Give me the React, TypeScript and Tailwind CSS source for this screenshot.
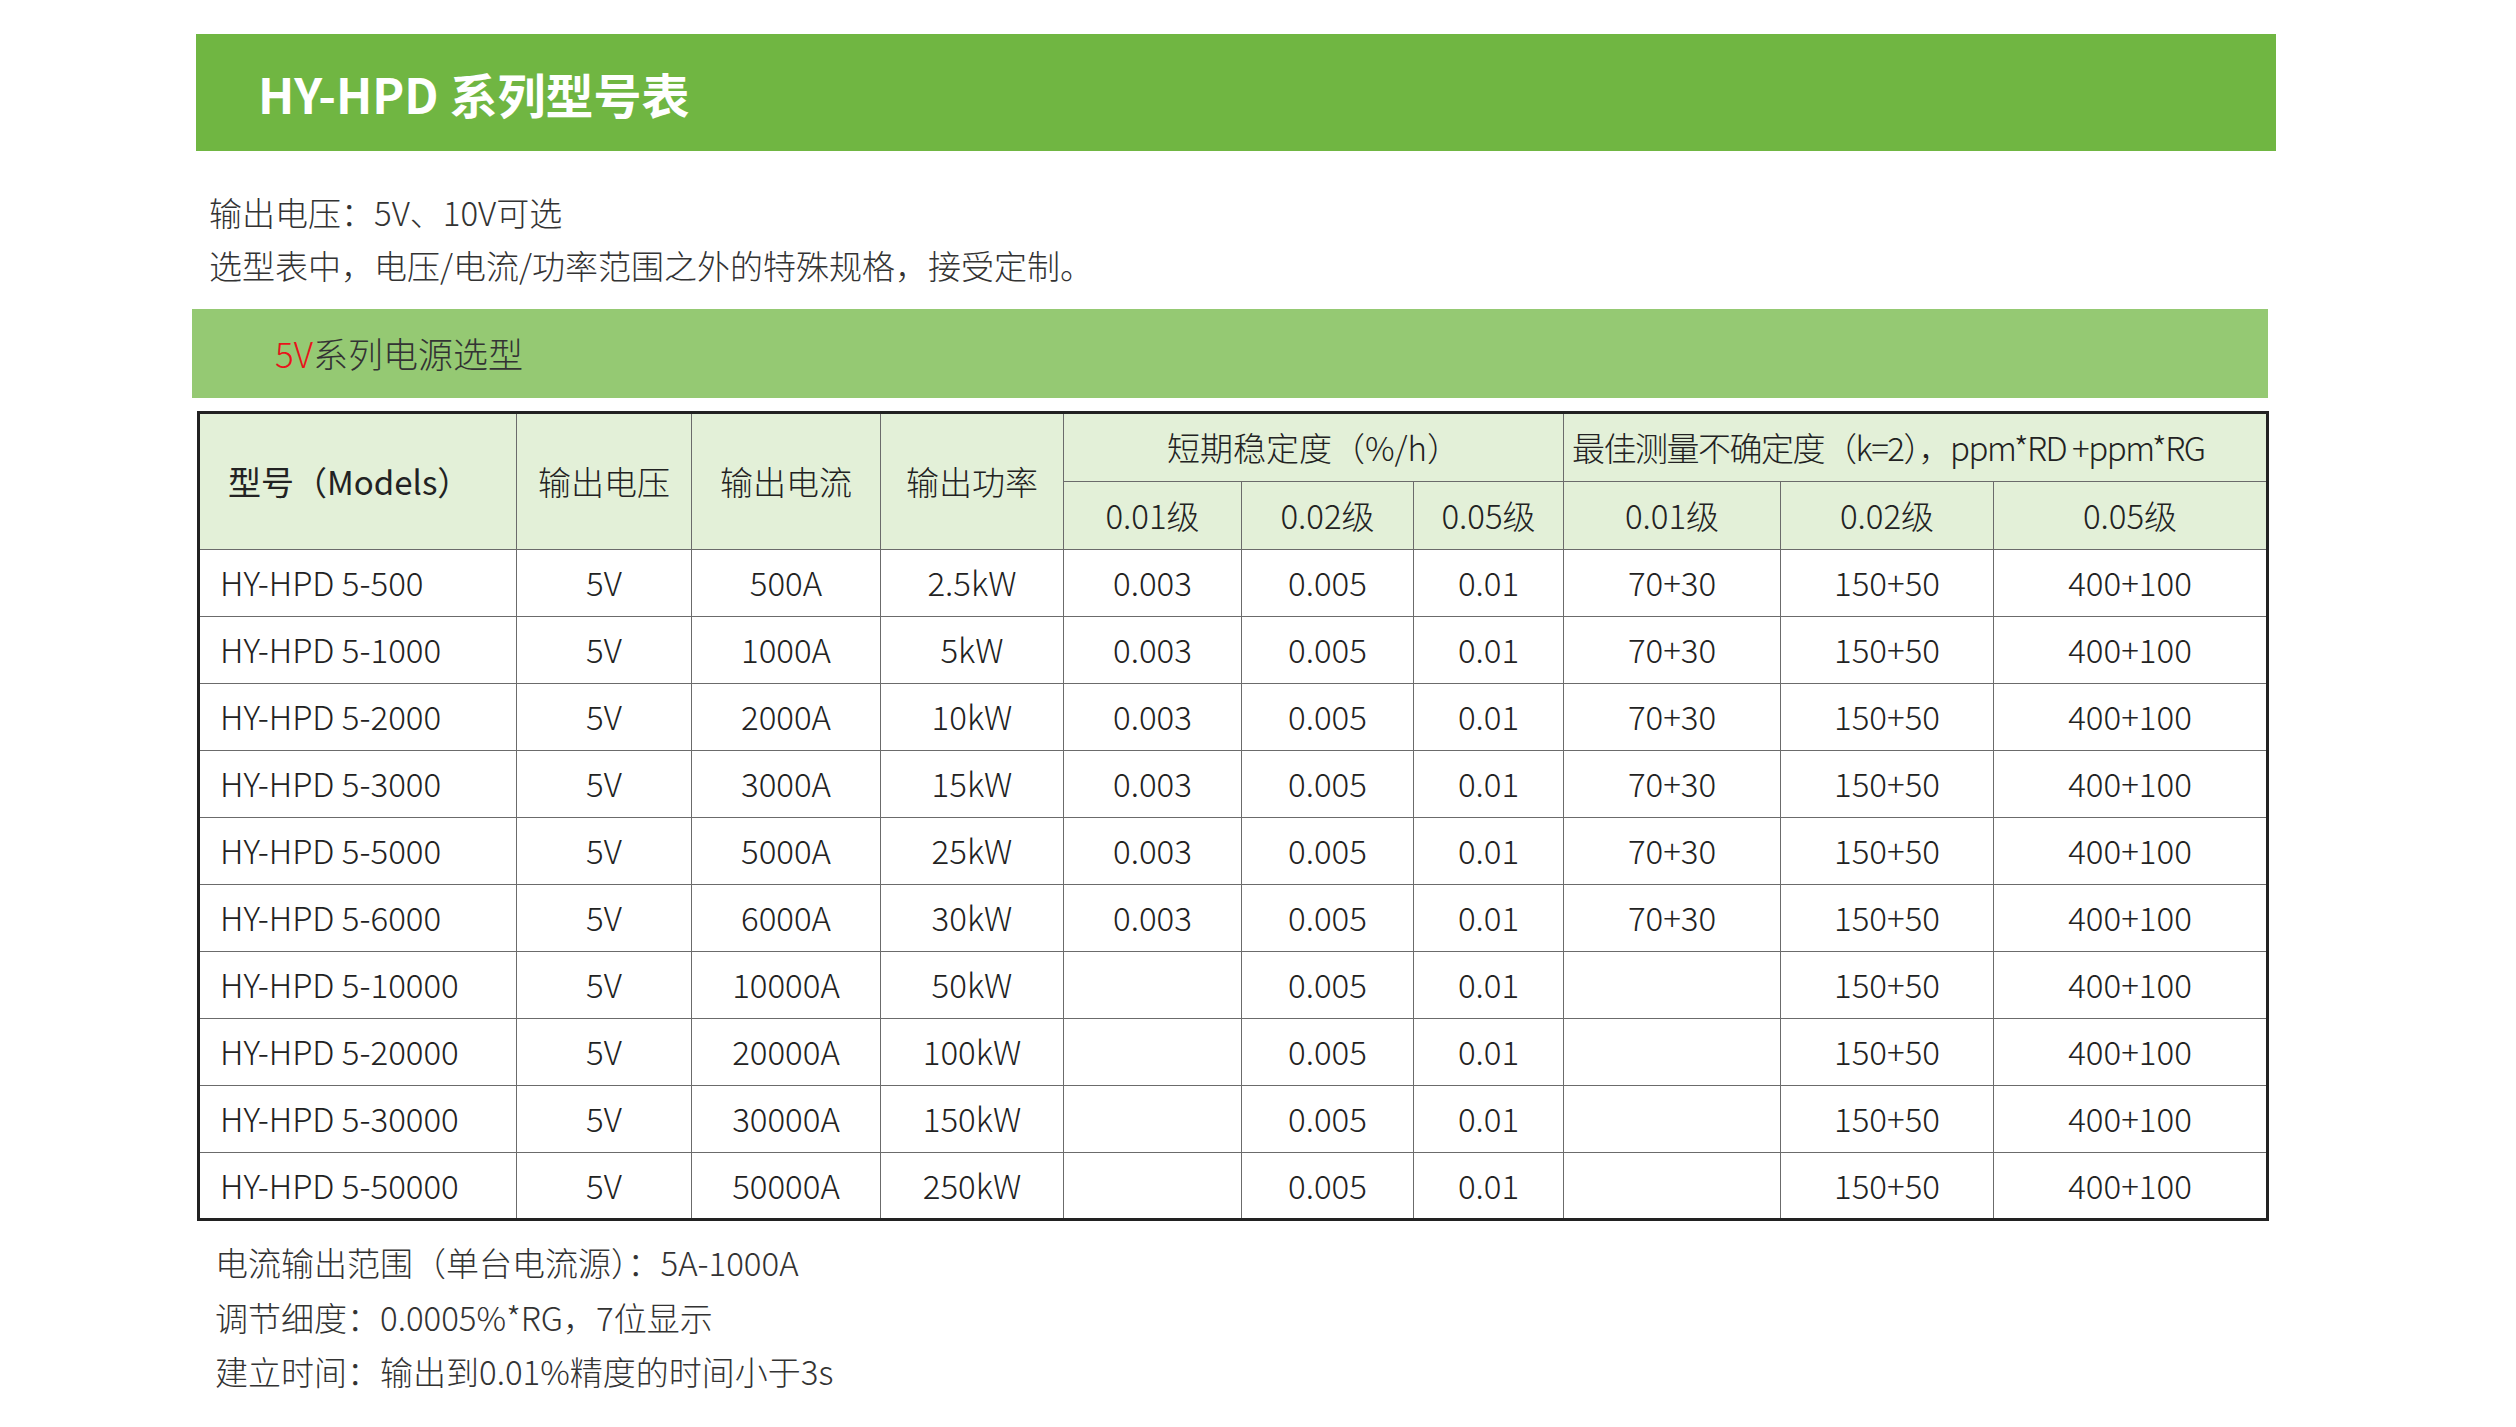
import React from "react";

const font = { fontFamily: '"Noto Sans CJK SC", "Noto Sans", sans-serif' };

const rows: [string, string, string, string, string, string, string, string, string, string][] = [
  ["HY-HPD 5-500", "5V", "500A", "2.5kW", "0.003", "0.005", "0.01", "70+30", "150+50", "400+100"],
  ["HY-HPD 5-1000", "5V", "1000A", "5kW", "0.003", "0.005", "0.01", "70+30", "150+50", "400+100"],
  ["HY-HPD 5-2000", "5V", "2000A", "10kW", "0.003", "0.005", "0.01", "70+30", "150+50", "400+100"],
  ["HY-HPD 5-3000", "5V", "3000A", "15kW", "0.003", "0.005", "0.01", "70+30", "150+50", "400+100"],
  ["HY-HPD 5-5000", "5V", "5000A", "25kW", "0.003", "0.005", "0.01", "70+30", "150+50", "400+100"],
  ["HY-HPD 5-6000", "5V", "6000A", "30kW", "0.003", "0.005", "0.01", "70+30", "150+50", "400+100"],
  ["HY-HPD 5-10000", "5V", "10000A", "50kW", "", "0.005", "0.01", "", "150+50", "400+100"],
  ["HY-HPD 5-20000", "5V", "20000A", "100kW", "", "0.005", "0.01", "", "150+50", "400+100"],
  ["HY-HPD 5-30000", "5V", "30000A", "150kW", "", "0.005", "0.01", "", "150+50", "400+100"],
  ["HY-HPD 5-50000", "5V", "50000A", "250kW", "", "0.005", "0.01", "", "150+50", "400+100"],
];

const td = "border border-[#6b6b6b] text-center align-middle p-0 font-light";

export default function App() {
  return (
    <div className="w-[2516px] h-[1427px] bg-white text-[#222]" style={font}>
      <div className="pt-[34px] pl-[196px]">
        <div className="w-[2080px] h-[117px] bg-[#70b642] flex items-center pl-[62px]">
          <span className="text-white font-bold text-[48px] leading-none">HY-HPD 系列型号表</span>
        </div>
        <div className="pl-[13px] pt-[35px] text-[33px] font-light leading-[53px] text-[#333]">
          <div>输出电压：5V、10V可选</div>
          <div>选型表中，电压/电流/功率范围之外的特殊规格，接受定制。</div>
        </div>
        <div className="-ml-[4px] mt-[17px] w-[2076px] h-[89px] bg-[#95c973] flex items-center pl-[83px] text-[35px] font-light text-[#333]">
          <span className="text-[#e8141b]">5V</span>系列电源选型
        </div>
        <table className="mt-[13px] ml-[1px] w-[2069px] table-fixed border-collapse border-[3px] border-[#222] text-[33px]">
          <colgroup>
            <col className="w-[318px]" />
            <col className="w-[175px]" />
            <col className="w-[189px]" />
            <col className="w-[183px]" />
            <col className="w-[178px]" />
            <col className="w-[172px]" />
            <col className="w-[150px]" />
            <col className="w-[217px]" />
            <col className="w-[213px]" />
            <col className="w-[274px]" />
          </colgroup>
          <thead className="bg-[#e3f0d8]">
            <tr className="h-[69px]">
              <th rowSpan={2} className={td + " text-left pl-[28px] font-normal"}>型号（Models）</th>
              <th rowSpan={2} className={td}>输出电压</th>
              <th rowSpan={2} className={td}>输出电流</th>
              <th rowSpan={2} className={td}>输出功率</th>
              <th colSpan={3} className={td}>短期稳定度（%/h）</th>
              <th colSpan={3} className={td + " text-left pl-[8px] whitespace-nowrap tracking-[-1.5px]"}>最佳测量不确定度（k=2），ppm*RD +ppm*RG</th>
            </tr>
            <tr className="h-[68px]">
              {["0.01级", "0.02级", "0.05级", "0.01级", "0.02级", "0.05级"].map((t, i) => (
                <th key={i} className={td}>{t}</th>
              ))}
            </tr>
          </thead>
          <tbody>
            {rows.map((r, i) => (
              <tr key={i} className="h-[67px]">
                {r.map((c, j) => (
                  <td key={j} className={td + (j === 0 ? " text-left pl-[20px]" : "")}>{c}</td>
                ))}
              </tr>
            ))}
          </tbody>
        </table>
        <div className="pl-[19px] pt-[14px] text-[33px] font-light leading-[54.5px] text-[#333]">
          <div>电流输出范围（单台电流源）：5A-1000A</div>
          <div>调节细度：0.0005%*RG，7位显示</div>
          <div>建立时间：输出到0.01%精度的时间小于3s</div>
        </div>
      </div>
    </div>
  );
}
